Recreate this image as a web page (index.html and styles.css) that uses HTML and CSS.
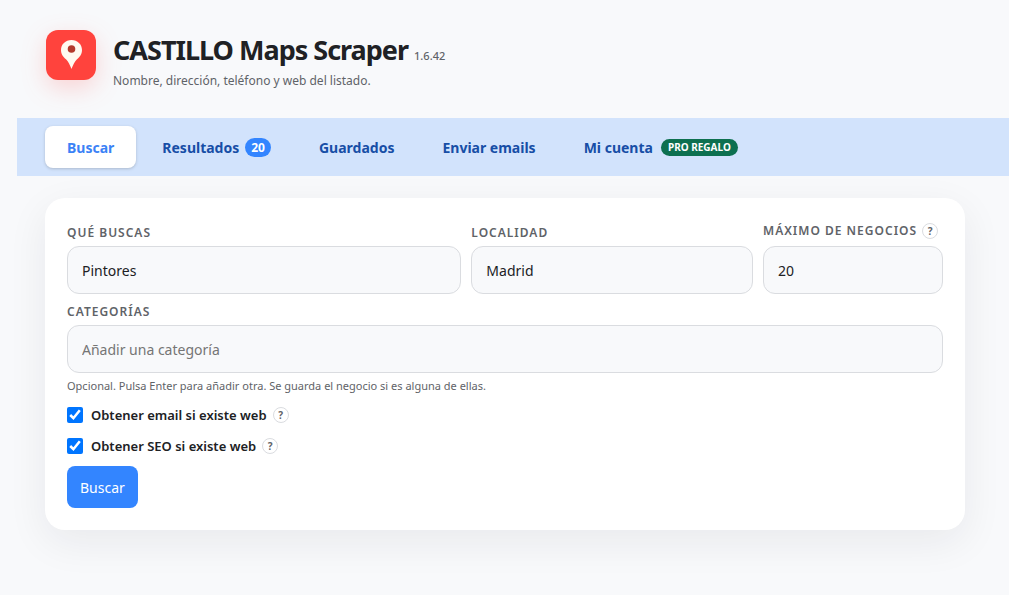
FILE: index.html
```html
<!DOCTYPE html>
<html lang="es">
<head>
<meta charset="utf-8">
<meta name="viewport" content="width=device-width, initial-scale=1">
<title>CASTILLO Maps Scraper</title>
<link rel="stylesheet" href="styles.css">
</head>
<body>
<div class="page">
  <header class="brand">
    <svg class="logo" viewBox="0 0 50 50" aria-hidden="true">
      <rect width="50" height="50" rx="12" fill="#ff433d"/>
      <path d="M25.500 10c-6 0-10.500 4.400-10.500 10 0 4.500 2.400 7 5 9.300 2.600 2.400 3.700 5.500 5.500 9.700 1.800-4.200 2.900-7.300 5.500-9.700 2.600-2.300 5-4.800 5-9.300 0-5.600-4.500-10-10.500-10z" fill="#fffaf0"/>
      <circle cx="25.500" cy="19" r="3.800" fill="#b33a2c"/>
    </svg>
    <div class="brand-text">
      <h1 class="title">CASTILLO Maps Scraper <span class="version">1.6.42</span></h1>
      <p class="subtitle">Nombre, dirección, teléfono y web del listado.</p>
    </div>
  </header>

  <nav class="tabs" aria-label="Secciones">
    <button class="tab tab-active" type="button">Buscar</button>
    <button class="tab" type="button">Resultados <span class="count">20</span></button>
    <button class="tab" type="button">Guardados</button>
    <button class="tab" type="button">Enviar emails</button>
    <button class="tab" type="button">Mi cuenta <span class="plan">PRO REGALO</span></button>
  </nav>

  <main class="content">
    <form class="card">
      <div class="fields">
        <div class="field">
          <label class="label" for="query">QUÉ BUSCAS</label>
          <input class="input" id="query" type="text" value="Pintores">
        </div>
        <div class="field">
          <label class="label" for="place">LOCALIDAD</label>
          <input class="input" id="place" type="text" value="Madrid">
        </div>
        <div class="field">
          <div class="label-row">
            <label class="label" for="max">MÁXIMO DE NEGOCIOS</label>
            <button class="help" type="button" aria-label="Ayuda sobre el máximo">?</button>
          </div>
          <input class="input" id="max" type="text" inputmode="numeric" value="20">
        </div>
      </div>
      <div class="field">
        <label class="label" for="category">CATEGORÍAS</label>
        <input class="input" id="category" type="text" placeholder="Añadir una categoría">
        <p class="hint">Opcional. Pulsa Enter para añadir otra. Se guarda el negocio si es alguna de ellas.</p>
      </div>
      <div class="check-row">
        <input class="check" id="email" type="checkbox" checked>
        <label class="check-label" for="email">Obtener email si existe web</label>
        <button class="help" type="button" aria-label="Ayuda sobre el email">?</button>
      </div>
      <div class="check-row">
        <input class="check" id="seo" type="checkbox" checked>
        <label class="check-label" for="seo">Obtener SEO si existe web</label>
        <button class="help" type="button" aria-label="Ayuda sobre el SEO">?</button>
      </div>
      <button class="submit" type="submit">Buscar</button>
    </form>
  </main>
</div>
</body>
</html>
```

FILE: styles.css
```css
* {
  box-sizing: border-box;
}

body {
  margin: 0;
  background: #f8f9fb;
  color: #202124;
  font-family: "Segoe UI", "Noto Sans", "Open Sans", sans-serif;
  font-size: 14px;
}

button,
input {
  font: inherit;
}

.page {
  margin-left: 17px;
}

.brand {
  display: flex;
  align-items: flex-start;
  gap: 16px;
  padding: 30px 28px 26px;
}

.logo {
  width: 52px;
  height: 50px;
  flex: none;
  filter: drop-shadow(0 8px 12px rgba(255, 67, 61, 0.2));
}

.title {
  margin: 0;
  font-size: 27px;
  line-height: 40px;
  font-weight: 700;
  letter-spacing: -1px;
}

.version {
  color: #5f6368;
  font-size: 11px;
  line-height: 1;
  font-weight: 500;
  letter-spacing: 0;
}

.subtitle {
  margin: 0;
  color: #5f6368;
  font-size: 12px;
  line-height: 22px;
}

.tabs {
  display: flex;
  gap: 4px;
  padding: 8px 28px;
  background: #d2e3fc;
}

.tab {
  display: flex;
  align-items: center;
  gap: 6px;
  height: 42px;
  padding: 0 22px;
  border: 0;
  border-radius: 8px;
  background: transparent;
  color: #174ea6;
  font-weight: 700;
  white-space: nowrap;
  cursor: pointer;
}

.tab-active {
  background: #fff;
  color: #3b82f6;
  box-shadow: 0 1px 3px rgba(60, 64, 67, 0.25);
}

.count {
  padding: 0 6px;
  border-radius: 10px;
  background: #3385ff;
  color: #fff;
  font-size: 12px;
  line-height: 19px;
}

.plan {
  margin-left: 2px;
  padding: 0 7px;
  border-radius: 9px;
  background: #0d7050;
  color: #fff;
  font-size: 10px;
  line-height: 17px;
}

.content {
  padding: 22px 44px 66px 28px;
}

.card {
  display: flex;
  flex-direction: column;
  gap: 10px;
  padding: 22px;
  border-radius: 20px;
  background: #fff;
  box-shadow: 0 12px 40px rgba(32, 33, 36, 0.07);
}

.fields {
  display: grid;
  grid-template-columns: 7fr 5fr 180px;
  align-items: end;
  gap: 10px;
}

.field {
  display: flex;
  flex-direction: column;
  gap: 5px;
  min-width: 0;
}

.label-row {
  display: flex;
  align-items: center;
  gap: 5px;
  height: 21px;
}

.label {
  color: #5f6368;
  font-size: 12px;
  line-height: 16px;
  font-weight: 600;
  letter-spacing: 1px;
  white-space: nowrap;
}

.input {
  width: 100%;
  height: 48px;
  padding: 0 14px;
  border: 1px solid #dadce0;
  border-radius: 12px;
  background: #f8f9fb;
  color: #202124;
}

.input::placeholder {
  color: #757575;
}

.hint {
  margin: 0;
  color: #5f6368;
  font-size: 11px;
  line-height: 16px;
}

.help {
  flex: none;
  width: 16px;
  height: 16px;
  padding: 0;
  border: 1px solid #dadce0;
  border-radius: 50%;
  background: #fff;
  color: #5f6368;
  font-size: 10px;
  line-height: 14px;
  font-weight: 700;
}

.check-row {
  display: flex;
  align-items: center;
  height: 21px;
}

.check {
  width: 16px;
  height: 16px;
  margin: 0 8px 0 0;
  accent-color: #0075ff;
}

.check-label {
  margin-right: 6px;
  font-size: 13px;
  font-weight: 600;
}

.submit {
  align-self: flex-start;
  height: 42px;
  padding: 0 13px;
  border: 0;
  border-radius: 8px;
  background: #3385ff;
  color: #fff;
  cursor: pointer;
}
```
